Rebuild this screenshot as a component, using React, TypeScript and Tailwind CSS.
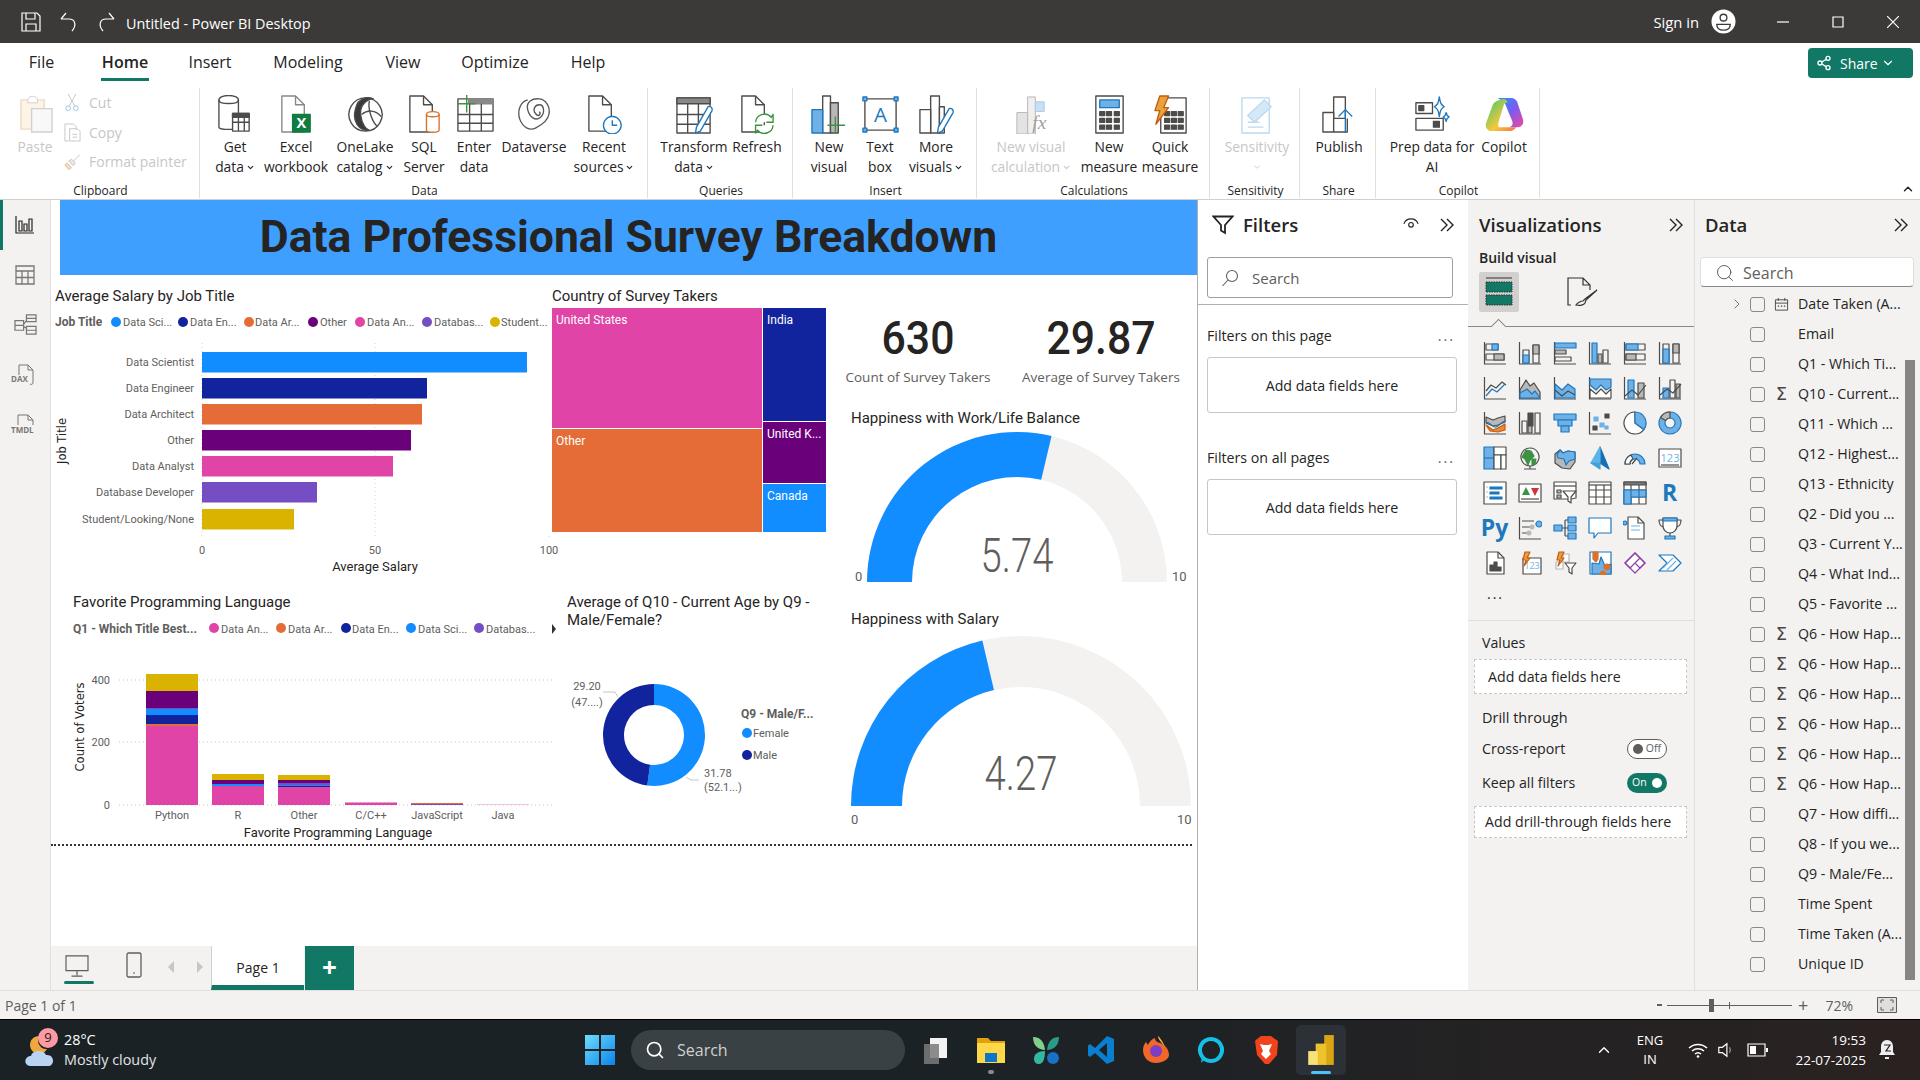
import type { ReactNode } from "react";
import { ChevronDown, ChevronRight, ChevronUp, Search, Share2 } from "lucide-react";

const BLUE = "#118DFF";
const NAVY = "#12239E";
const ORANGE = "#E66C37";
const PURPLE = "#6B007B";
const PINK = "#E044A7";
const VIOLET = "#744EC2";
const GOLD = "#D9B300";

// tiny icon format: [path, fill, stroke]; a path starting with "T" is a text glyph "Tlabel|x|y|size|weight"
const D = "#4d4c4a";
const B = "#1d78be";
const L = "#6fb1e6";
const G = "#bab8b6";
const N = "none";
const W = "#ffffff";
type Shape = [string, string, string];

function Ico({ s, box = 24, className }: { s: Shape[]; box?: number; className?: string }) {
  return (
    <svg viewBox={`0 0 ${box} ${box}`} className={className}>
      {s.map(([d, fill, stroke], i) => {
        if (d.startsWith("T")) {
          const [label, x, y, size, weight] = d.slice(1).split("|");
          return (
            <text key={i} x={x} y={y} fontSize={size} fontWeight={weight ?? "700"} fill={fill} textAnchor="middle" fontFamily="Open Sans, sans-serif">
              {label}
            </text>
          );
        }
        return <path key={i} d={d} fill={fill} stroke={stroke} strokeWidth={box > 30 ? 1.4 : 1.2} strokeLinejoin="round" />;
      })}
    </svg>
  );
}

const AX: Shape = ["M1.5 1v22H23", N, D];
const vizIcons: (Shape[] | string)[] = [
  [AX, ["M3 3h12v6H3z", N, D], ["M9 3h6v6H9z", L, B], ["M3 13h18v6H3z", N, D], ["M11 13h10v6H11z", G, D]],
  [AX, ["M5 9h6v13H5z", N, D], ["M5 14h6v8H5z", L, B], ["M15 4h6v18h-6z", N, D], ["M15 4h6v9h-6z", G, D]],
  [["M1.5 1v22H23", N, D], ["M2 2h21v5H2z", L, B], ["M2 9h11v4H2z", G, D], ["M2 16h16v4H2z", N, D]],
  [AX, ["M4 2h5v20H4z", L, B], ["M10 13h4v9h-4z", G, D], ["M15 9h5v13h-5z", N, D]],
  [AX, ["M3 3h19v6H3z", N, D], ["M3 3h12v6H3z", L, B], ["M3 13h19v6H3z", N, D], ["M3 13h10v6H3z", G, D]],
  [AX, ["M5 3h6v19H5z", N, D], ["M5 8h6v14H5z", L, B], ["M15 3h6v19h-6z", N, D], ["M15 3h6v9h-6z", G, D]],
  [AX, ["M3 15l5-6 5 3 6-6 4 3", N, D], ["M3 20l6-7 5 3 8-8", N, B]],
  [AX, ["M2 22V14l6-10 4 6 4-3 6 9v6z", G, D], ["M2 22v-5l7-4 5 5 3-3 5 7z", L, B]],
  [AX, ["M2 8l7 6 6-6 7 5v9H2z", L, B], ["M2 14l7 6 6-5 7 4", N, D]],
  [AX, ["M2 3h21v8l-5 3-5-5-5 5-6-5z", L, B], ["M2 22V13l6 5 5-5 5 5 5-5v9z", W, D]],
  [AX, ["M5 4h6v18H5z", L, B], ["M15 7h6v15h-6z", G, D], ["M2 20l7-6 6 5 8-10", N, D]],
  [AX, ["M5 12h6v10H5z", L, B], ["M12 4h5v18h-5z", N, D], ["M18 8h4v14h-4z", G, D], ["M2 19l7-6 6 4 8-9", N, D]],
  [AX, ["M3 6l7 3 5-2 7-2v6l-7 3-5 1-7-3z", G, D], ["M3 14l7 5 5-2 7-4v6l-7 2-8-1z", "#e68a3a", "#c75b12"], ["M3 11c5 0 6 6 10 5s5-6 10-6", N, B]],
  [AX, ["M4 10h5v12H4z", N, D], ["M10 14h4v8h-4z", G, D], ["M10 2h5v13h-5z", D, D], ["M17 2h5v20h-5z", N, D]],
  [["M1 3h22v6H1z", L, B], ["M5 9h14v6H5z", L, B], ["M8 15h8v6H8z", L, B]],
  [AX, ["M6 6h4v4H6z", L, L], ["M12 12h4v4h-4z", L, L], ["M5 15h4v4H5z", D, D], ["M17 3h4v4h-4z", D, D], ["M17 15h3v3h-3z", L, L]],
  [["M12 1a11 11 0 1 0 8.8 17.6L12 12z", W, D], ["M12 1a11 11 0 0 1 8.8 17.6L12 12z", L, B]],
  [["M12 1a11 11 0 1 1-.01 0zM12 7a5 5 0 1 0 .01 0z", L, B], ["M12 1a11 11 0 0 0-9.5 5.5L7.5 9.5A5 5 0 0 1 12 7z", G, D]],
  [["M1 1h10v22H1z", L, B], ["M1 12h10", N, B], ["M11 1h12v8H11z", W, D], ["M11 9h7v14h-7z", W, D], ["M18 9h5v14h-5z", W, D]],
  [["M12 2a9 9 0 1 1-.01 0z", "#f4f4f4", D], ["M8 4l5 1 3 5-4 4-2 5-3-6-3-2z", "#3d9142", "#3d9142"], ["M14 13l4 0-1 5-3 1z", "#3d9142", "#3d9142"], ["M6 23h12M12 20v3", N, D]],
  [["M2 8l5-4 3 3 5-2 7 1v10l-5 7-8-1-7-5z", G, D], ["M7 4l3 3 5-2 7 1v7l-6 2-3 4-2-6-6-1-1-3z", L, B]],
  [["M12 1l9 22-9-6z", "#1a6fb3", "#1a6fb3"], ["M12 1L3 17l9-1z", "#5bb5e8", "#5bb5e8"], ["M3 17l9 0 0 6z", "#3fa2dc", "#3fa2dc"]],
  [["M2 18a10 10 0 0 1 20 0h-5a5 5 0 0 0-10 0z", L, B], ["M2 18a10 10 0 0 1 6-9l2 4a5 5 0 0 0-3 5z", W, D], ["M9 18l5-6", N, D]],
  [["M1 3h22v18H1z", W, D], ["T123|12|16|11|400", L, N], ["M3 19h18", N, D]],
  [["M1 1h22v22H1z", W, D], ["M7 6h12v2H7zM7 11h9v2H7zM7 16h12v2H7z", B, B], ["M3 6h2M3 11h2M3 16h2", N, G]],
  [["M1 3h22v18H1z", W, D], ["M3 18h18", N, D], ["M8 6l4 8H4z", "#3d9142", N], ["M13 7h8l-4 8z", "#d13438", N]],
  [["M1 1h22v16l-5 1H1z", W, D], ["M1 5h22", N, D], ["M4 9h4v3H4zM4 14h4v3H4z", G, D], ["M10 10h13l-5 6v6l-3-2v-4z", W, D]],
  [["M1 1h22v22H1z", W, D], ["M1 4h22", D, D], ["M1 9h22M1 16h22M8 4v19M16 4v19", N, D]],
  [["M1 1h22v22H1z", W, D], ["M1 1h22v3H1z", "#777", D], ["M1 9h22M1 16h22M8 4v19M16 4v19", N, D], ["M1 9h7v14H1zM8 9h8v7H8zM16 9h7v7h-7z", L, B]],
  "R",
  "Py",
  [AX, ["M4 5h12M4 11h8M4 17h5", N, D], ["M21 5a3 3 0 1 1-.01 0z", L, B], ["M14 9a2 2 0 1 1-.01 0zM11 15a2 2 0 1 1-.01 0z", G, G]],
  [["M1 9h8v6H1z", L, B], ["M15 1h8v6h-8zM15 9h8v6h-8zM15 17h8v6h-8z", L, B], ["M9 12h6M12 4v16M12 4h3M12 20h3", N, D]],
  [["M1 2h22v15H10l-4 5v-5H1z", W, B]],
  [["M5 1h10l6 6v16H5z", W, D], ["M15 1v6h6", N, D], ["M2 9a2 2 0 1 1 .01 0z", L, B], ["M8 10h9M8 14h9", N, L]],
  [["M5 2h14v8a7 7 0 0 1-14 0z", W, D], ["M5 2h14v3H5z", L, B], ["M5 4H1c0 5 2 6 4 7M19 4h4c0 5-2 6-4 7M12 17v3", N, D], ["M7 20h10v3H7z", L, B]],
  [["M4 1h11l6 6v16H4z", W, D], ["M15 1v6h6", N, D], ["M7 14h3v6H7zM11 11h3v9h-3zM15 16h3v4h-3z", D, D]],
  [["M5 7h18v16H5z", W, D], ["T123|14|18|9|400", L, N], ["M7 1h5l-3 6h3l-6 8 2-6H5z", "#e8a33d", "#c75b12"]],
  [["M10 3h6v8h-6zM3 11h7v7H3z", W, G], ["M12 12h11l-4 5v6l-3-2v-4z", W, D], ["M6 1h5l-3 6h3l-6 8 2-6H4z", "#e8a33d", "#c75b12"]],
  [["M2 1h21v22H2z", W, B], ["M4 12l7 1 2-7 4 9 6-2v10H4z", L, B], ["M5 1h5v7l-2 3-3-3z", "#d9722a", "#d9722a"], ["M19 13a3 3 0 1 1-.01 0zM15 20a3 3 0 1 1-.01 0z", "#d9722a", "#d9722a"]],
  [["M12 2l10 10-10 10L2 12z", W, "#8f3fa8"], ["M12 2l5 5-10 10-5-5zM17 7l5 5-5 5-5-5z", N, "#8f3fa8"]],
  [["M1 4h14l8 8-8 8H1l8-8z", W, B], ["M5 17L15 7M9 19l9-9", N, L]],
];

const ribbonIcons: Record<string, Shape[]> = {
  getData: [["M3 5c0-6 20-6 20 0v28c0 3-20 3-20 0z", W, D], ["M3 5c0 5 20 5 20 0", N, D], ["M17 19h17v18H17z", W, D], ["M17 19h17v4H17z", D, D], ["M17 28h17M23 23v14M29 23v14", N, D]],
  excel: [["M5 1h14l9 9v28H5z", W, "#8a8886"], ["M19 1v9h9", N, "#8a8886"], ["M16 20h18v18H16z", "#107c41", "#107c41"], ["TX|25|34|15", W, N]],
  onelake: [["M20 3a17 17 0 1 1-.01 0z", W, D], ["M12 8c8-8 14-5 16-4-6 0-14 6-13 16s6 16 9 16C15 38 3 28 12 8z", "#3a3a3a", D], ["M16 20c6-5 14-5 20 2", N, D], ["M24 6c-2 8 3 22 8 26", N, D]],
  sql: [["M5 1h14l9 9v28H5z", W, D], ["M19 1v9h9", N, D], ["M22 20c0-4 13-4 13 0v16c0 3-13 3-13 0z", W, "#d9722a"], ["M22 20c0 3 13 3 13 0", N, "#d9722a"]],
  enter: [["M3 4h36v33H3z", W, D], ["M14 4h25v5H14z", "#8a8886", "#8a8886"], ["M3 20h36M3 29h36M15 9v28M27 9v28", N, D], ["M12 0v18M3 9h18", N, "#3d9142"]],
  dataverse: [["M13 5c-8 2-11 12-8 20s10 12 16 9 13-8 14-15-3-14-10-15-14 3-12 11 8 12 13 8 4-13-1-13-7 5-4 9 6 1 4-2", N, "#5a5958"]],
  recent: [["M4 1h14l9 9v27H4z", W, D], ["M18 1v9h9", N, D], ["M28 22a9 9 0 1 1-.01 0z", W, B], ["M28 26v5h5", N, B]],
  transform: [["M2 3h34v36H2z", W, D], ["M2 3h34v6H2z", "#8a8886", D], ["M2 20h34M2 30h34M13 9v30M24 9v30", N, D], ["M34 12c2-1 5 1 4 4L26 37l-5 2 1-6z", W, B]],
  refresh: [["M4 1h14l9 9v28H4z", W, D], ["M18 1v9h9", N, D], ["M18 28a9 9 0 0 1 16-5l2-3v8h-7M36 31a9 9 0 0 1-16 5l-2 3v-8h7", W, "#3d9142"]],
  newVisual: [["M13 1h8v38h-8z", W, D], ["M2 15h11v24H2z", L, B], ["M21 8h8v31h-8z", G, D], ["M26 22v18M18 31h18", N, "#3d9142"]],
  textBox: [["M4 4h32v32H4z", W, D], ["TA|20|28|21|400", B, N], ["M2 2h4v4H2zM34 2h4v4h-4zM2 34h4v4H2zM34 34h4v4h-4z", L, B]],
  moreVisuals: [["M14 1h9v38h-9z", W, D], ["M3 15h11v24H3z", W, D], ["M23 12h5v27h-5z", W, D], ["M33 14c2-1 5 1 4 4L26 37l-5 2 1-6z", W, B]],
  measure: [["M6 1h28v38H6z", W, D], ["M10 5h20v8H10z", L, B], ["M10 17h5v4h-5zM17 17h5v4h-5zM25 17h5v4h-5zM10 24h5v4h-5zM17 24h5v4h-5zM25 24h5v4h-5zM10 31h5v4h-5zM17 31h5v4h-5zM25 31h5v4h-5z", D, D]],
  quick: [["M10 3h26v36H10z", W, D], ["M14 17h5v4h-5zM21 17h5v4h-5zM28 17h5v4h-5zM14 24h5v4h-5zM21 24h5v4h-5zM28 24h5v4h-5zM14 31h5v4h-5zM21 31h5v4h-5zM28 31h5v4h-5z", D, D], ["M9 1h9l-5 12h5L5 30l4-14H4z", "#e8a33d", "#c75b12"]],
  sens: [["M4 3h28v36H4z", W, "#bcd9ef"], ["M10 21L27 5l7 7-17 16z", "#d5e8f6", "#bcd9ef"], ["M10 28h12M10 33h16", N, "#bcd9ef"]],
  publish: [["M14 2h12v22H14z", W, D], ["M3 18h11v20H3z", W, D], ["M14 38h14V24", N, D], ["M26 39V15M19 22l7-7 7 7", N, B]],
  prep: [["M3 8h17v11H3z", W, D], ["M6 11h5v5H6z", D, D], ["M3 24h28v12H3z", W, D], ["M21 27h6v6h-6z", D, D], ["M27 2c1 7 2 8 5 10-3 2-4 3-5 10-1-7-2-8-5-10 3-2 4-3 5-10z", W, B], ["M34 18c.5 3 1 3.5 3 4.5-2 1-2.5 1.5-3 4.5-.5-3-1-3.5-3-4.5 2-1 2.5-1.5 3-4.5z", W, B]],
};

type RibbonItem = { icon: ReactNode; lines: ReactNode[]; w: string; off?: boolean };

const big = "h-[39px] w-[39px]";
const groups: { label: string; w: string; pad: string; items: RibbonItem[] }[] = [
  {
    label: "Data",
    w: "w-[448px]",
    pad: "pl-[5px]",
    items: [
      { w: "w-[60px]", icon: <Ico s={ribbonIcons.getData} box={40} className={big} />, lines: ["Get", <Caret key="c" text="data" />] },
      { w: "w-[62px]", icon: <Ico s={ribbonIcons.excel} box={40} className={big} />, lines: ["Excel", "workbook"] },
      { w: "w-[76px]", icon: <Ico s={ribbonIcons.onelake} box={40} className={big} />, lines: ["OneLake", <Caret key="c" text="catalog" />] },
      { w: "w-[42px]", icon: <Ico s={ribbonIcons.sql} box={40} className={big} />, lines: ["SQL", "Server"] },
      { w: "w-[58px]", icon: <Ico s={ribbonIcons.enter} box={40} className={big} />, lines: ["Enter", "data"] },
      { w: "w-[62px]", icon: <Ico s={ribbonIcons.dataverse} box={40} className={big} />, lines: ["Dataverse"] },
      { w: "w-[78px]", icon: <Ico s={ribbonIcons.recent} box={40} className={big} />, lines: ["Recent", <Caret key="c" text="sources" />] },
    ],
  },
  {
    label: "Queries",
    w: "w-[145px]",
    pad: "pl-[8px]",
    items: [
      { w: "w-[76px]", icon: <Ico s={ribbonIcons.transform} box={40} className={big} />, lines: ["Transform", <Caret key="c" text="data" />] },
      { w: "w-[50px]", icon: <Ico s={ribbonIcons.refresh} box={40} className={big} />, lines: ["Refresh"] },
    ],
  },
  {
    label: "Insert",
    w: "w-[184px]",
    pad: "pl-[12px]",
    items: [
      { w: "w-[48px]", icon: <Ico s={ribbonIcons.newVisual} box={40} className={big} />, lines: ["New", "visual"] },
      { w: "w-[54px]", icon: <Ico s={ribbonIcons.textBox} box={40} className={big} />, lines: ["Text", "box"] },
      { w: "w-[58px]", icon: <Ico s={ribbonIcons.moreVisuals} box={40} className={big} />, lines: ["More", <Caret key="c" text="visuals" />] },
    ],
  },
  {
    label: "Calculations",
    w: "w-[233px]",
    pad: "pl-[8px]",
    items: [
      {
        w: "w-[92px]",
        off: true,
        icon: (
          <svg viewBox="0 0 40 40" className={big}>
            <path d="M16 2h8v38h-8z" fill="#f0efee" stroke={G} />
            <path d="M5 18h11v22H5z" fill="#e4e3e2" stroke={G} />
            <path d="M24 7h9v10h-9z" fill="#c9dff2" stroke="#a9cbe8" />
            <text x="28" y="35" fontSize="20" fontStyle="italic" fontFamily="Liberation Serif, serif" fill="#a19f9d" textAnchor="middle">
              fx
            </text>
          </svg>
        ),
        lines: ["New visual", <Caret key="c" text="calculation" />],
      },
      { w: "w-[64px]", icon: <Ico s={ribbonIcons.measure} box={40} className={big} />, lines: ["New", "measure"] },
      { w: "w-[58px]", icon: <Ico s={ribbonIcons.quick} box={40} className={big} />, lines: ["Quick", "measure"] },
    ],
  },
  {
    label: "Sensitivity",
    w: "w-[90px]",
    pad: "pl-[5px]",
    items: [{ w: "w-[84px]", off: true, icon: <Ico s={ribbonIcons.sens} box={40} className={big} />, lines: ["Sensitivity", <ChevronDown key="c" className="mx-auto mt-[5px] h-[10px] w-[10px]" />] }],
  },
  {
    label: "Share",
    w: "w-[76px]",
    pad: "pl-[4px]",
    items: [{ w: "w-[70px]", icon: <Ico s={ribbonIcons.publish} box={40} className={big} />, lines: ["Publish"] }],
  },
  {
    label: "Copilot",
    w: "w-[164px]",
    pad: "pl-[8px]",
    items: [
      { w: "w-[96px]", icon: <Ico s={ribbonIcons.prep} box={40} className={big} />, lines: ["Prep data for", "AI"] },
      {
        w: "w-[48px]",
        icon: (
          <svg viewBox="0 0 40 36" className={big}>
            <defs>
              <linearGradient id="cp1" x1="0" y1="0" x2="1" y2="1">
                <stop offset="0" stopColor="#1d9bf0" />
                <stop offset="0.5" stopColor="#7a5cf0" />
                <stop offset="1" stopColor="#f0469e" />
              </linearGradient>
              <linearGradient id="cp2" x1="0" y1="0" x2="1" y2="1">
                <stop offset="0" stopColor="#37c871" />
                <stop offset="0.6" stopColor="#f5c83c" />
                <stop offset="1" stopColor="#f2724a" />
              </linearGradient>
            </defs>
            <path d="M13 1h14c3 0 5 2 6 4l6 18c1 4-1 8-6 8h-8c3-1 4-3 3-6L21 8c-1-3-3-4-8-7z" fill="url(#cp1)" />
            <path d="M15 3c3-2 8-1 8 3l-3 0-5 16c-1 4-2 5-1 9h18c-2 3-4 4-8 4H7c-5 0-7-4-6-8L8 8c1-3 4-4 7-5z" fill="url(#cp2)" />
          </svg>
        ),
        lines: ["Copilot"],
      },
    ],
  },
];

function Caret({ text }: { text: string }) {
  return (
    <span className="inline-flex items-center gap-[2px]">
      {text}
      <ChevronDown className="h-[9px] w-[9px]" strokeWidth={3} />
    </span>
  );
}

const tabs = [
  { t: "File", w: "w-[83px]" },
  { t: "Home", w: "w-[84px]", on: true },
  { t: "Insert", w: "w-[86px]" },
  { t: "Modeling", w: "w-[110px]" },
  { t: "View", w: "w-[80px]" },
  { t: "Optimize", w: "w-[104px]" },
  { t: "Help", w: "w-[82px]" },
];

const fields: { name: string; sigma?: boolean; date?: boolean }[] = [
  { name: "Date Taken (A...", date: true },
  { name: "Email" },
  { name: "Q1 - Which Ti..." },
  { name: "Q10 - Current...", sigma: true },
  { name: "Q11 - Which ..." },
  { name: "Q12 - Highest..." },
  { name: "Q13 - Ethnicity" },
  { name: "Q2 - Did you ..." },
  { name: "Q3 - Current Y..." },
  { name: "Q4 - What Ind..." },
  { name: "Q5 - Favorite ..." },
  { name: "Q6 - How Hap...", sigma: true },
  { name: "Q6 - How Hap...", sigma: true },
  { name: "Q6 - How Hap...", sigma: true },
  { name: "Q6 - How Hap...", sigma: true },
  { name: "Q6 - How Hap...", sigma: true },
  { name: "Q6 - How Hap...", sigma: true },
  { name: "Q7 - How diffi..." },
  { name: "Q8 - If you we..." },
  { name: "Q9 - Male/Fe..." },
  { name: "Time Spent" },
  { name: "Time Taken (A..." },
  { name: "Unique ID" },
];

const salaryBars = [
  { name: "Data Scientist", y: 352, end: 527, c: BLUE },
  { name: "Data Engineer", y: 378, end: 427, c: NAVY },
  { name: "Data Architect", y: 404, end: 422, c: ORANGE },
  { name: "Other", y: 430, end: 411, c: PURPLE },
  { name: "Data Analyst", y: 456, end: 393, c: PINK },
  { name: "Database Developer", y: 482, end: 317, c: VIOLET },
  { name: "Student/Looking/None", y: 509, end: 294, c: GOLD },
];

const stacks = [
  { name: "Python", x: 146, segs: [[674, 691, GOLD], [691, 708, PURPLE], [708, 709, VIOLET], [709, 715, BLUE], [715, 724, NAVY], [724, 726, ORANGE], [726, 805, PINK]] },
  { name: "R", x: 212, segs: [[774, 780, GOLD], [780, 784, PURPLE], [784, 786, BLUE], [786, 805, PINK]] },
  { name: "Other", x: 278, segs: [[775, 780, GOLD], [780, 783, PURPLE], [783, 785, VIOLET], [785, 786, BLUE], [786, 787, NAVY], [787, 805, PINK]] },
  { name: "C/C++", x: 345, segs: [[802, 803, "#e9a0d0"], [803, 805, PINK]] },
  { name: "JavaScript", x: 411, segs: [[803, 804, ORANGE], [804, 805, VIOLET]] },
  { name: "Java", x: 477, segs: [[804, 805, "#eec3df"]] },
] as { name: string; x: number; segs: [number, number, string][] }[];

function sector(cx: number, cy: number, R: number, r: number, a0: number, a1: number) {
  const pt = (rad: number, a: number) => `${cx + rad * Math.cos(a)} ${cy + rad * Math.sin(a)}`;
  const large = a1 - a0 > Math.PI ? 1 : 0;
  return `M${pt(R, a0)}A${R} ${R} 0 ${large} 1 ${pt(R, a1)}L${pt(r, a1)}A${r} ${r} 0 ${large} 0 ${pt(r, a0)}Z`;
}

const lbl = "font-['Roboto'] text-[11px] fill-[#605e5c]";
const axisTitle = "font-['Roboto'] text-[13px] fill-[#252423]";
const axisTitleRot = "font-['DejaVu_Sans'] text-[11.5px] fill-[#252423]";
const legendBold = "font-['Roboto'] text-[12px] font-bold fill-[#605e5c]";

function Legend({ items }: { items: { dot: number; text: number; t: string; c: string }[] }) {
  return (
    <>
      {items.map((l) => (
        <g key={l.t}>
          <circle cx={l.dot} cy={322} r={5} fill={l.c} />
          <text x={l.text} y={326} className={lbl}>
            {l.t}
          </text>
        </g>
      ))}
    </>
  );
}

function SalaryChart() {
  return (
    <svg viewBox="50 310 520 265" className="absolute left-[-1px] top-[110px] h-[265px] w-[520px]">
      <Legend
        items={[
          { dot: 116, text: 123, t: "Data Sci...", c: BLUE },
          { dot: 183, text: 190, t: "Data En...", c: NAVY },
          { dot: 249, text: 255, t: "Data Ar...", c: ORANGE },
          { dot: 313, text: 320, t: "Other", c: PURPLE },
          { dot: 360, text: 367, t: "Data An...", c: PINK },
          { dot: 427, text: 434, t: "Databas...", c: VIOLET },
          { dot: 495, text: 501, t: "Student...", c: GOLD },
        ]}
      />
      <text x={55} y={326} className={legendBold}>
        Job Title
      </text>
      <path d="M202 343V538M375 343V538M549 536V538" stroke="#d5d3d1" strokeDasharray="1 3" />
      {salaryBars.map((b) => (
        <g key={b.name}>
          <rect x={202} y={b.y} width={b.end - 202} height={20.5} fill={b.c} />
          <text x={194} y={b.y + 14} textAnchor="end" className={lbl}>
            {b.name}
          </text>
        </g>
      ))}
      <text x={202} y={554} textAnchor="middle" className={lbl}>
        0
      </text>
      <text x={375} y={554} textAnchor="middle" className={lbl}>
        50
      </text>
      <text x={549} y={554} textAnchor="middle" className={lbl}>
        100
      </text>
      <text x={375} y={571} textAnchor="middle" className={axisTitle}>
        Average Salary
      </text>
      <text x={66} y={441} textAnchor="middle" transform="rotate(-90 66 441)" className={axisTitleRot}>
        Job Title
      </text>
    </svg>
  );
}

function Treemap() {
  const cells = [
    { x: 552, y: 308, w: 210, h: 120, c: PINK, t: "United States" },
    { x: 552, y: 429, w: 210, h: 103, c: ORANGE, t: "Other" },
    { x: 763, y: 308, w: 63, h: 113, c: NAVY, t: "India" },
    { x: 763, y: 422, w: 63, h: 61, c: PURPLE, t: "United K..." },
    { x: 763, y: 484, w: 63, h: 48, c: BLUE, t: "Canada" },
  ];
  return (
    <svg viewBox="552 308 274 224" className="absolute left-[501px] top-[108px] h-[224px] w-[274px]">
      {cells.map((c) => (
        <g key={c.t}>
          <rect x={c.x} y={c.y} width={c.w} height={c.h} fill={c.c} />
          <text x={c.x + 4} y={c.y + 16} className="fill-white font-['Roboto'] text-[12px]">
            {c.t}
          </text>
        </g>
      ))}
    </svg>
  );
}

function LanguageChart() {
  const leg = [
    { dot: 214, text: 221, t: "Data An...", c: PINK },
    { dot: 281, text: 288, t: "Data Ar...", c: ORANGE },
    { dot: 346, text: 352, t: "Data En...", c: NAVY },
    { dot: 411, text: 418, t: "Data Sci...", c: BLUE },
    { dot: 479, text: 486, t: "Databas...", c: VIOLET },
  ];
  return (
    <svg viewBox="70 618 490 222" className="absolute left-[19px] top-[418px] h-[222px] w-[490px]">
      {leg.map((l) => (
        <g key={l.t}>
          <circle cx={l.dot} cy={628} r={5} fill={l.c} />
          <text x={l.text} y={633} className={lbl}>
            {l.t}
          </text>
        </g>
      ))}
      <text x={73} y={633} className={legendBold}>
        Q1 - Which Title Best...
      </text>
      <path d="M552 624l4 5-4 5z" fill="#333" />
      <path d="M119 680H553M119 742H553M119 805H553" stroke="#c8c6c4" strokeDasharray="1 3" />
      {[
        [400, 684],
        [200, 746],
        [0, 809],
      ].map(([v, y]) => (
        <text key={v} x={110} y={y} textAnchor="end" className={lbl}>
          {v}
        </text>
      ))}
      {stacks.map((s) => (
        <g key={s.name}>
          {s.segs.map(([y0, y1, c]) => (
            <rect key={y0} x={s.x} y={y0} width={52} height={y1 - y0} fill={c} />
          ))}
          <text x={s.x + 26} y={819} textAnchor="middle" className={lbl}>
            {s.name}
          </text>
        </g>
      ))}
      <text x={338} y={837} textAnchor="middle" className={axisTitle}>
        Favorite Programming Language
      </text>
      <text x={84} y={727} textAnchor="middle" transform="rotate(-90 84 727)" className={axisTitleRot}>
        Count of Voters
      </text>
    </svg>
  );
}

function DonutChart() {
  const start = -Math.PI / 2;
  const mid = start + 2 * Math.PI * 0.521;
  return (
    <svg viewBox="570 670 260 130" className="absolute left-[519px] top-[470px] h-[130px] w-[260px]">
      <path d={sector(654, 735, 51, 30, start, mid)} fill={BLUE} />
      <path d={sector(654, 735, 51, 30, mid, start + 2 * Math.PI)} fill={NAVY} />
      <path d="M603 692h12l3 5M686 777l5 3h8" fill="none" stroke="#c8c6c4" />
      <text x={587} y={690} textAnchor="middle" className={lbl}>
        29.20
      </text>
      <text x={587} y={706} textAnchor="middle" className={lbl}>
        (47....)
      </text>
      <text x={704} y={777} className={lbl}>
        31.78
      </text>
      <text x={704} y={791} className={lbl}>
        (52.1...)
      </text>
      <text x={741} y={718} className={legendBold}>
        Q9 - Male/F...
      </text>
      <circle cx={747} cy={733} r={5} fill={BLUE} />
      <text x={753} y={737} className={lbl}>
        Female
      </text>
      <circle cx={747} cy={755} r={5} fill={NAVY} />
      <text x={753} y={759} className={lbl}>
        Male
      </text>
    </svg>
  );
}

function Gauge({ cx, cy, R, r, v }: { cx: number; cy: number; R: number; r: number; v: number }) {
  const a = Math.PI + (Math.PI * v) / 10;
  return (
    <svg viewBox={`${cx - R} ${cy - R} ${2 * R} ${R}`} className={R === 150 ? "h-[150px] w-[300px]" : "h-[170px] w-[340px]"}>
      <path d={sector(cx, cy, R, r, Math.PI, 2 * Math.PI)} fill="#f3f2f1" />
      <path d={sector(cx, cy, R, r, Math.PI, a)} fill={BLUE} />
    </svg>
  );
}

function ReportCanvas() {
  const title = "absolute font-['Roboto'] text-[15px] leading-[18px] text-[#252423]";
  const kpi = "absolute w-[180px] text-center font-['Roboto'] text-[47px] font-medium leading-[50px] text-[#252423] scale-x-[0.91]";
  const kpiSub = "absolute w-[180px] text-center text-[13.5px] leading-[18px] text-[#605e5c]";
  const gaugeVal = "absolute w-[120px] text-center font-['Roboto'] text-[49px] font-light leading-[50px] text-[#605e5c] scale-x-[0.78]";
  const gaugeEnd = "absolute font-['Roboto'] text-[13px] leading-[16px] text-[#605e5c]";
  return (
    <div className="relative h-[746px] w-[1146px] overflow-hidden bg-white">
      <div className="absolute left-[9px] top-0 flex h-[75px] w-[1137px] items-center justify-center bg-[#3e9fff]">
        <span className="font-['Roboto'] text-[44.5px] font-bold text-[#252423]">Data Professional Survey Breakdown</span>
      </div>

      <div className={`${title} left-[4px] top-[87px]`}>Average Salary by Job Title</div>
      <SalaryChart />
      <div className={`${title} left-[501px] top-[87px]`}>Country of Survey Takers</div>
      <Treemap />

      <div className={`${kpi} left-[777px] top-[113px]`}>630</div>
      <div className={`${kpiSub} left-[777px] top-[168px]`}>Count of Survey Takers</div>
      <div className={`${kpi} left-[960px] top-[113px]`}>29.87</div>
      <div className={`${kpiSub} left-[960px] top-[168px]`}>Average of Survey Takers</div>

      <div className={`${title} left-[800px] top-[209px]`}>Happiness with Work/Life Balance</div>
      <div className="absolute left-[816px] top-[232px]">
        <Gauge cx={1017} cy={582} R={150} r={105} v={5.74} />
      </div>
      <div className={`${gaugeVal} left-[906px] top-[331px]`}>5.74</div>
      <div className={`${gaugeEnd} left-[804px] top-[369px]`}>0</div>
      <div className={`${gaugeEnd} left-[1121px] top-[369px]`}>10</div>

      <div className={`${title} left-[800px] top-[410px]`}>Happiness with Salary</div>
      <div className="absolute left-[800px] top-[436px]">
        <Gauge cx={1021} cy={806} R={170} r={119} v={4.27} />
      </div>
      <div className={`${gaugeVal} left-[910px] top-[549px]`}>4.27</div>
      <div className={`${gaugeEnd} left-[800px] top-[612px]`}>0</div>
      <div className={`${gaugeEnd} left-[1126px] top-[612px]`}>10</div>

      <div className={`${title} left-[22px] top-[393px]`}>Favorite Programming Language</div>
      <LanguageChart />
      <div className={`${title} left-[516px] top-[393px] w-[270px] leading-[17px]`}>Average of Q10 - Current Age by Q9 - Male/Female?</div>
      <DonutChart />

      <div className="absolute left-0 top-[644px] w-[1141px] border-t-2 border-dotted border-[#333]" />
    </div>
  );
}

function Chevrons({ className = "" }: { className?: string }) {
  return (
    <svg viewBox="0 0 16 16" className={`h-[16px] w-[16px] ${className}`}>
      <path d="M2 2l6 6-6 6M8 2l6 6-6 6" fill="none" stroke="#252423" strokeWidth="1.4" />
    </svg>
  );
}

function FiltersPane() {
  const label = "flex h-6 items-center justify-between pr-[9px] text-[14.2px] text-[#252423]";
  const box = "mt-[9px] flex h-[56px] w-[250px] items-center justify-center rounded-[3px] border border-[#c8c6c4] pt-[2px] text-[14.2px] text-[#252423]";
  return (
    <div className="w-[271px] shrink-0 border-l border-[#b3b0ad] bg-white">
      <div className="flex h-[50px] items-center pl-[14px] pr-[13px]">
        <svg viewBox="0 0 22 20" className="h-[20px] w-[22px]">
          <path d="M1.5 1.5h19L13 10v8l-4-2.5V10z" fill="none" stroke="#252423" strokeWidth="1.8" />
        </svg>
        <span className="ml-[9px] flex-1 text-[18.5px] font-semibold text-[#252423]">Filters</span>
        <svg viewBox="0 0 18 14" className="mb-[4px] mr-[20px] h-[14px] w-[16px]">
          <path d="M1 8a8.500 8.500 0 0 1 16 0" fill="none" stroke="#252423" strokeWidth="1.3" />
          <circle cx="9" cy="9" r="2.6" fill="none" stroke="#252423" strokeWidth="1.3" />
        </svg>
        <Chevrons />
      </div>
      <div className="ml-[9px] mt-[7px] flex h-[41px] w-[246px] items-center rounded-[3px] border border-[#a19f9d] pl-[13px] pt-[1px] text-[15px] text-[#605e5c]">
        <svg viewBox="0 0 18 18" className="h-[18px] w-[18px]">
          <circle cx="11" cy="7" r="5.5" fill="none" stroke="#605e5c" strokeWidth="1.1" />
          <path d="M7 11l-5.500 6" stroke="#605e5c" strokeWidth="1.1" />
        </svg>
        <span className="ml-[13px]">Search</span>
      </div>
      <div className="mt-[6px] border-t border-[#b3b0ad]" />
      <div className="pl-[9px] pr-[4px] pt-[19px]">
        <div className={label}>
          <span>Filters on this page</span>
          <span className="tracking-[2px] text-[#605e5c]">...</span>
        </div>
        <div className={box}>Add data fields here</div>
        <div className={`${label} mt-[33px]`}>
          <span>Filters on all pages</span>
          <span className="tracking-[2px] text-[#605e5c]">...</span>
        </div>
        <div className={box}>Add data fields here</div>
      </div>
    </div>
  );
}

function Toggle({ on }: { on?: boolean }) {
  return on ? (
    <div className="flex h-[20px] w-[40px] items-center justify-between rounded-full bg-[#117865] px-[5px] text-[10.5px] text-white">
      <span>On</span>
      <span className="h-[10px] w-[10px] rounded-full bg-white" />
    </div>
  ) : (
    <div className="flex h-[20px] w-[40px] items-center justify-between rounded-full border border-[#605e5c] bg-white px-[5px] text-[10.5px] text-[#605e5c]">
      <span className="h-[10px] w-[10px] rounded-full bg-[#605e5c]" />
      <span>Off</span>
    </div>
  );
}

function VizPane() {
  const dashed = "ml-[6px] flex w-[213px] items-center border border-dashed border-[#c8c6c4] bg-white text-[14.2px] text-[#252423]";
  return (
    <div className="w-[227px] shrink-0 border-r border-[#e1dfdd] bg-[#f3f2f1]">
      <div className="flex h-[49px] items-center justify-between pl-[11px] pr-[10px]">
        <span className="text-[18.5px] font-semibold text-[#252423]">Visualizations</span>
        <Chevrons />
      </div>
      <div className="flex h-[16px] items-center pl-[11px] text-[14px] font-semibold text-[#252423]">Build visual</div>
      <div className="relative mt-[7px] flex h-[55px] items-start border-b border-[#8a8886] pl-[11px]">
        <div className="flex h-[40px] w-[40px] items-center justify-center rounded-[2px] bg-[#d2d0ce]">
          <svg viewBox="0 0 32 32" className="h-[32px] w-[32px]">
            <path d="M3 2h26" stroke="#333" strokeWidth="1" />
            <path d="M3 6h26v10H3zM3 19h26v10H3z" fill="#117865" stroke="#333" strokeWidth="1" strokeDasharray="1.5 1" />
          </svg>
        </div>
        <svg viewBox="0 0 32 32" className="ml-[47px] mt-[4px] h-[32px] w-[32px]">
          <path d="M5 29H2V2h15l7 7v5M17 2v7h7" fill="none" stroke="#333" strokeWidth="1.2" />
          <path d="M31 14L19 23l-2 2c-2 0-6 2-7 4 4 1 8 0 9-2l1-3z" fill="none" stroke="#333" strokeWidth="1.2" />
        </svg>
        <div className="absolute bottom-[-6px] left-[25px] h-[11px] w-[11px] rotate-45 border-l border-t border-[#8a8886] bg-[#f3f2f1]" />
      </div>
      <div className="grid grid-cols-[repeat(6,35px)] grid-rows-[repeat(7,35px)] pl-[9px] pt-[8px]">
        {vizIcons.map((s, i) => (
          <div key={i} className="flex items-center justify-center">
            {typeof s === "string" ? (
              <span className="text-[23px] font-bold leading-none text-[#1d78be]">{s}</span>
            ) : (
              <Ico s={s} className="h-[24px] w-[24px]" />
            )}
          </div>
        ))}
      </div>
      <div className="flex h-[26px] items-center pl-[19px] text-[14px] tracking-[2px] text-[#252423]">...</div>
      <div className="mt-[14px] border-t border-[#e1dfdd]" />
      <div className="mt-[11px] flex h-[21px] items-center pl-[14px] pt-[1px] text-[14.2px] text-[#252423]">Values</div>
      <div className={`${dashed} mt-[6px] h-[35px] pl-[13px]`}>Add data fields here</div>
      <div className="mt-[13px] flex h-[21px] items-center pl-[14px] text-[14.5px] font-medium text-[#252423]">Drill through</div>
      <div className="mt-[11px] flex h-[20px] items-center justify-between pl-[14px] pr-[27px] text-[14.2px] text-[#252423]">
        <span>Cross-report</span>
        <Toggle />
      </div>
      <div className="mt-[14px] flex h-[20px] items-center justify-between pl-[14px] pr-[27px] text-[14.2px] text-[#252423]">
        <span>Keep all filters</span>
        <Toggle on />
      </div>
      <div className={`${dashed} mt-[13px] h-[32px] pl-[10px]`}>Add drill-through fields here</div>
    </div>
  );
}

function DataPane() {
  return (
    <div className="relative flex-1 bg-[#f3f2f1]">
      <div className="flex h-[50px] items-center justify-between pl-[10px] pr-[11px]">
        <span className="text-[18.5px] font-semibold text-[#252423]">Data</span>
        <Chevrons />
      </div>
      <div className="ml-[5px] mt-[7px] flex h-[30px] w-[214px] items-center rounded-[4px] border border-[#e1dfdd] border-b-[#8a8886] bg-white pl-[14px] pt-[1px] text-[16px] text-[#605e5c]">
        <Search className="h-[20px] w-[20px]" strokeWidth={1.2} />
        <span className="ml-[8px]">Search</span>
      </div>
      <div className="mt-[2px]">
        {fields.map((f, i) => (
          <div key={i} className="relative flex h-[30px] items-center pl-[55px] text-[14.2px] text-[#252423]">
            {f.date && <ChevronRight className="absolute left-[34px] h-[16px] w-[16px] text-[#605e5c]" strokeWidth={1.3} />}
            <span className="h-[15px] w-[15px] rounded-[3px] border border-[#8a8886]" />
            <span className="flex w-[33px] items-center justify-center text-[#484644]">
              {f.sigma && <span className="font-['DejaVu_Sans'] text-[18px] leading-none">Σ</span>}
              {f.date && (
                <svg viewBox="0 0 16 16" className="h-[15px] w-[15px]">
                  <path d="M1.5 3h13v11h-13zM1.5 6.5h13M4.5 1v3M11.5 1v3" fill="none" stroke="#484644" />
                  <path d="M4 9h1.5v1.500H4zM7.300 9h1.500v1.500H7.300zM10.500 9H12v1.500h-1.500z" fill="#484644" />
                </svg>
              )}
            </span>
            <span>{f.name}</span>
          </div>
        ))}
      </div>
      <div className="absolute right-[5px] top-[160px] h-[620px] w-[10px] bg-[#868583]" />
    </div>
  );
}

function RailIcon({ children, className = "" }: { children: ReactNode; className?: string }) {
  return <div className={`flex h-[41px] w-full items-center justify-center text-[#797775] ${className}`}>{children}</div>;
}

function LeftRail() {
  return (
    <div className="relative flex w-[51px] shrink-0 flex-col items-center border-r border-[#e1dfdd] bg-[#f3f2f1] pt-[4px]">
      <div className="absolute left-0 top-0 h-[50px] w-[3px] bg-[#117865]" />
      <RailIcon>
        <svg viewBox="0 0 20 20" className="h-[20px] w-[20px]">
          <path d="M1 1v17h18" fill="none" stroke="#252423" strokeWidth="1.2" />
          <path d="M4 6h3v10H4zM9 9h3v7H9zM14 4h3v12h-3z" fill="none" stroke="#252423" strokeWidth="1.2" />
        </svg>
      </RailIcon>
      <RailIcon className="mt-[9px]">
        <svg viewBox="0 0 20 20" className="h-[20px] w-[20px]">
          <path d="M1 1h18v18H1zM1 6h18M1 12.5h18M7 6v13M13 6v13" fill="none" stroke="#797775" strokeWidth="1.3" />
        </svg>
      </RailIcon>
      <RailIcon className="mt-[9px]">
        <svg viewBox="0 0 24 24" className="h-[23px] w-[23px]">
          <path d="M1 8h9v10H1zM1 13h9M13 2h10v7H13zM13 5.5h10M13 14h10v8H13zM13 18h10M10 12l3-4M10 14l3 2" fill="none" stroke="#797775" strokeWidth="1.3" />
        </svg>
      </RailIcon>
      <RailIcon className="mt-[9px]">
        <div className="relative">
          <svg viewBox="0 0 22 22" className="h-[22px] w-[22px]">
            <path d="M5 11V1h9l5 5v13c0 1-2 2-3 1" fill="none" stroke="#797775" strokeWidth="1" />
            <path d="M14 1v5h5" fill="none" stroke="#797775" strokeWidth="1" />
          </svg>
          <span className="absolute left-[-3px] top-[11px] text-[8px] font-bold leading-none">DAX</span>
        </div>
      </RailIcon>
      <RailIcon className="mt-[9px]">
        <div className="relative">
          <svg viewBox="0 0 22 22" className="h-[22px] w-[22px]">
            <path d="M4 11V1h10l5 5v5M14 1v5h5" fill="none" stroke="#797775" strokeWidth="1" />
          </svg>
          <span className="absolute left-[-3px] top-[12px] text-[8px] font-bold leading-none">TMDL</span>
        </div>
      </RailIcon>
    </div>
  );
}

function TitleBar() {
  return (
    <div className="flex h-[43px] items-center bg-[#3b3a39] text-white">
      <svg viewBox="0 0 20 20" className="ml-[21px] h-[20px] w-[20px]">
        <path d="M1 1h15l3 3v15H1zM5 1v6h9V1M5 19v-7h10v7" fill="none" stroke="#fff" strokeWidth="1.2" />
      </svg>
      <svg viewBox="0 0 18 22" className="ml-[19px] h-[22px] w-[18px]">
        <path d="M1 8l5-6M1 8h8c6 0 8 6 3 12" fill="none" stroke="#fff" strokeWidth="1.2" />
      </svg>
      <svg viewBox="0 0 18 22" className="ml-[19px] h-[22px] w-[18px]">
        <path d="M17 8l-5-6M17 8H9C3 8 1 14 6 20" fill="none" stroke="#fff" strokeWidth="1.2" />
      </svg>
      <span className="ml-[11px] flex-1 pt-[4px] text-[14.4px]">Untitled - Power BI Desktop</span>
      <span className="pt-[1px] text-[14.8px]">Sign in</span>
      <svg viewBox="0 0 26 26" className="ml-[12px] h-[25px] w-[25px]">
        <circle cx="13" cy="13" r="12.5" fill="#fff" />
        <circle cx="13" cy="9" r="3.5" fill="none" stroke="#3b3a39" strokeWidth="1.4" />
        <path d="M6 16h14c0 4-3 6-7 6s-7-2-7-6z" fill="none" stroke="#3b3a39" strokeWidth="1.4" />
      </svg>
      <svg viewBox="0 0 12 12" className="ml-[41px] h-[12px] w-[12px]">
        <path d="M0 6h12" stroke="#fff" strokeWidth="1.2" />
      </svg>
      <svg viewBox="0 0 12 12" className="ml-[43px] h-[12px] w-[12px]">
        <path d="M1 1h10v10H1z" fill="none" stroke="#fff" strokeWidth="1.2" />
      </svg>
      <svg viewBox="0 0 12 12" className="ml-[43px] mr-[21px] h-[12px] w-[12px]">
        <path d="M0 0l12 12M12 0L0 12" stroke="#fff" strokeWidth="1.2" />
      </svg>
    </div>
  );
}

function RibbonGroup({ label, w, pad, items }: { label: string; w: string; pad: string; items: RibbonItem[] }) {
  return (
    <div className={`flex h-[110px] shrink-0 flex-col border-r border-[#e1dfdd] ${w}`}>
      <div className={`flex h-[92px] ${pad}`}>
        {items.map((it, i) => (
          <div key={i} className={`flex shrink-0 flex-col items-center pt-[7px] ${it.w} ${it.off ? "text-[#c8c6c4]" : "text-[#252423]"}`}>
            {it.icon}
            <div className="mt-[3px] flex flex-col items-center whitespace-nowrap text-[13.8px] leading-[20px]">
              {it.lines.map((l, j) => (
                <span key={j}>{l}</span>
              ))}
            </div>
          </div>
        ))}
      </div>
      <div className="mt-[4px] pl-[2px] text-center text-[12px] leading-[14px] text-[#252423]">{label}</div>
    </div>
  );
}

function Ribbon() {
  const small = "flex h-[29.5px] items-center text-[14px] text-[#c8c6c4]";
  return (
    <div className="relative bg-white">
      <div className="flex h-[45px] items-start">
        {tabs.map((t) => (
          <div key={t.t} className={`relative flex h-[38px] items-center justify-center text-[16px] text-[#252423] ${t.w} ${t.on ? "font-semibold" : ""}`}>
            {t.t}
            {t.on && <span className="absolute bottom-0 left-[18px] right-[18px] h-[3px] bg-[#117865]" />}
          </div>
        ))}
        <div className="ml-auto mr-[7px] mt-[5px] flex h-[30px] w-[105px] items-center rounded-[4px] bg-[#117865] pl-[8px] text-[14px] text-white">
          <Share2 className="h-[16px] w-[16px]" />
          <span className="ml-[8px]">Share</span>
          <ChevronDown className="ml-[3px] h-[14px] w-[14px]" />
        </div>
      </div>
      <div className="flex h-[112px] items-start border-b border-[#d2d0ce]">
        <div className="flex h-[110px] w-[200px] shrink-0 flex-col border-r border-[#e1dfdd]">
          <div className="flex h-[92px]">
            <div className="flex w-[64px] shrink-0 flex-col items-center pl-[9px] pr-[3px] pt-[7px] text-[13.8px] text-[#c8c6c4]">
              <svg viewBox="0 0 36 40" className="h-[39px] w-[35px]">
                <path d="M3 5h24v30H3z" fill="#fdf3e6" stroke="#f0d9bd" strokeWidth="1.4" />
                <path d="M10 5c0-5 10-5 10 0v3H10z" fill="#fff" stroke="#d2d0ce" />
                <path d="M14 14h21v24H14z" fill="#f8f8f8" stroke="#d2d0ce" strokeWidth="1.4" />
              </svg>
              <span className="mt-[3px] leading-[20px]">Paste</span>
            </div>
            <div className="flex flex-col">
              <div className={small}>
                <svg viewBox="0 0 16 20" className="mr-[9px] h-[19px] w-[16px]">
                  <path d="M4 1l7 13M12 1L5 14" stroke="#c8c6c4" />
                  <circle cx="4" cy="16" r="2.5" fill="none" stroke="#9ec4e4" />
                  <circle cx="12" cy="16" r="2.5" fill="none" stroke="#9ec4e4" />
                </svg>
                Cut
              </div>
              <div className={small}>
                <svg viewBox="0 0 18 20" className="mr-[8px] h-[19px] w-[17px]">
                  <path d="M1 1h9l3 3v3M5 19H1V1" fill="none" stroke="#c8c6c4" />
                  <path d="M6 6h8l3 3v10H6z" fill="none" stroke="#c8c6c4" />
                  <path d="M9 12h5M9 15h5" stroke="#c8c6c4" />
                </svg>
                Copy
              </div>
              <div className={small}>
                <svg viewBox="0 0 18 18" className="mr-[8px] h-[18px] w-[17px]">
                  <path d="M17 1L9 9M3 10l5 5-3 2-4-5z" fill="#f5dcbf" stroke="#dcc0a0" />
                  <path d="M5 8l5 5 2-3-4-4z" fill="#e8e8e8" stroke="#c8c6c4" />
                </svg>
                Format painter
              </div>
            </div>
          </div>
          <div className="mt-[4px] pl-[2px] text-center text-[12px] leading-[14px] text-[#252423]">Clipboard</div>
        </div>
        {groups.map((g) => (
          <RibbonGroup key={g.label} {...g} />
        ))}
        <ChevronUp className="absolute bottom-[4px] right-[5px] h-[14px] w-[14px] text-[#252423]" strokeWidth={2.5} />
      </div>
    </div>
  );
}

function PageTabs() {
  return (
    <div className="flex h-[44px] items-stretch bg-[#f3f2f1] pl-[13px]">
      <div className="relative w-[30px] pt-[9px]">
        <svg viewBox="0 0 26 24" className="h-[22px] w-[26px]">
          <path d="M1 1h24v16H1zM13 17v5M7 23h12" fill="none" stroke="#605e5c" strokeWidth="1.3" />
        </svg>
        <span className="absolute bottom-[6px] left-0 h-[3px] w-[30px] rounded-full bg-[#117865]" />
      </div>
      <svg viewBox="0 0 16 26" className="ml-[32px] mt-[6px] h-[26px] w-[16px]">
        <rect x="1" y="1" width="14" height="24" rx="1.5" fill="none" stroke="#605e5c" strokeWidth="1.3" />
        <path d="M7 21h2" stroke="#605e5c" />
      </svg>
      <svg viewBox="0 0 8 14" className="ml-[25px] mt-[14px] h-[14px] w-[8px]">
        <path d="M7 1L1 7l6 6z" fill="#c8c6c4" />
      </svg>
      <svg viewBox="0 0 8 14" className="ml-[21px] mt-[14px] h-[14px] w-[8px]">
        <path d="M1 1l6 6-6 6z" fill="#c8c6c4" />
      </svg>
      <div className="ml-[7px] flex w-[93px] items-center justify-center border-b-[5px] border-l border-b-[#117865] border-l-[#d2d0ce] bg-white pt-[4px] text-[14px] font-medium text-[#252423]">Page 1</div>
      <div className="ml-px flex w-[49px] items-center justify-center bg-[#117865] pb-[2px] text-[26px] font-bold leading-none text-white">+</div>
    </div>
  );
}

function StatusBar() {
  return (
    <div className="flex h-[29px] items-center border-t border-[#e1dfdd] bg-[#f3f2f1] pl-[5px] text-[14px] text-[#605e5c]">
      <span className="flex-1">Page 1 of 1</span>
      <span className="mr-[5px] h-[2px] w-[5px] bg-[#605e5c]" />
      <div className="relative h-px w-[125px] bg-[#605e5c]">
        <span className="absolute left-[42px] top-[-6px] h-[13px] w-[5px] bg-[#605e5c]" />
        <span className="absolute left-[62px] top-[-3px] h-[7px] w-px bg-[#605e5c]" />
      </div>
      <span className="ml-[6px] text-[18px] leading-none">+</span>
      <span className="ml-[17px]">72%</span>
      <svg viewBox="0 0 20 16" className="ml-[24px] mr-[23px] h-[16px] w-[20px]">
        <path d="M.5.5h19v15H.5z" fill="#e1dfdd" stroke="#605e5c" />
        <path d="M4 6V3h3M13 3h3v3M16 10v3h-3M7 13H4v-3" fill="none" stroke="#605e5c" />
      </svg>
    </div>
  );
}

function TaskIcon({ children, active, dot }: { children: ReactNode; active?: boolean; dot?: boolean }) {
  return (
    <div className={`relative mr-[5px] flex h-[50px] w-[50px] shrink-0 items-center justify-center rounded-[5px] ${active ? "bg-[#2b3136]" : ""}`}>
      {children}
      {dot && <span className="absolute bottom-[1px] h-[4px] w-[6px] rounded-full bg-[#8a8a8a]" />}
      {active && <span className="absolute bottom-[1px] h-[3px] w-[20px] rounded-full bg-[#4cc2ff]" />}
    </div>
  );
}

function Taskbar() {
  return (
    <div className="relative flex h-[61px] items-center border-t border-black bg-gradient-to-r from-[#1b2226] via-[#1b2226] to-[#2a2221] text-white">
      <div className="relative ml-[25px] h-[40px] w-[32px]">
        <svg viewBox="0 0 32 38" className="h-[38px] w-[32px]">
          <path d="M15 6a9 9 0 1 0 7 13 8 8 0 0 1-7-13z" fill="#f0a83c" />
          <path d="M6 36c-8 0-7-10 0-10 1-6 13-7 15-1 9-1 9 11 2 11z" fill="#b9d3f2" />
        </svg>
        <span className="absolute left-[13px] top-[-2px] flex h-[20px] w-[20px] items-center justify-center rounded-full bg-[#ff99a4] text-[13px] text-[#1b1b1b]">9</span>
      </div>
      <div className="ml-[7px] w-[260px] text-[14.4px] leading-[20px]">
        <div>28°C</div>
        <div className="text-[#e3e3e3]">Mostly cloudy</div>
      </div>
      <svg viewBox="0 0 30 30" className="ml-[261px] h-[30px] w-[30px]">
        <defs>
          <linearGradient id="win" x1="0" y1="0" x2="1" y2="1">
            <stop offset="0" stopColor="#6fdcff" />
            <stop offset="1" stopColor="#0a84e8" />
          </linearGradient>
        </defs>
        <path d="M0 0h14v14H0zM16 0h14v14H16zM0 16h14v14H0zM16 16h14v14H16z" fill="url(#win)" />
      </svg>
      <div className="ml-[16px] flex h-[40px] w-[274px] items-center rounded-full bg-[#3a4144] pl-[14px] text-[16px] text-[#d0d0d0]">
        <Search className="h-[20px] w-[20px] text-white" strokeWidth={2} />
        <span className="ml-[12px]">Search</span>
      </div>
      <div className="ml-[6px] flex items-center">
        <TaskIcon>
          <svg viewBox="0 0 30 30" className="h-[30px] w-[30px]">
            <path d="M9 3h17v20H9z" fill="#f2f2f2" />
            <path d="M3 9h15v20H3z" fill="#7a7a7a" opacity="0.85" />
          </svg>
        </TaskIcon>
        <TaskIcon dot>
          <svg viewBox="0 0 30 30" className="h-[30px] w-[30px]">
            <path d="M1 3h11l3 3h14v22H1z" fill="#e0a30e" />
            <path d="M1 8h28v20H1z" fill="#ffd84a" />
            <path d="M9 18h12v9H9z" fill="#0f75c9" />
          </svg>
        </TaskIcon>
        <TaskIcon>
          <svg viewBox="0 0 30 30" className="h-[30px] w-[30px]">
            <path d="M2 2c7 0 11 4 12 13C7 15 2 10 2 2z" fill="#7fd18a" />
            <path d="M28 2c-7 0-11 4-12 13 7 0 12-5 12-13z" fill="#2a9a8a" />
            <path d="M14 16c-7 0-11 3-11 8 0 3 2 5 5 5 4 0 6-5 6-13z" fill="#35b6a0" />
            <circle cx="22" cy="23" r="6" fill="#1672c4" />
          </svg>
        </TaskIcon>
        <TaskIcon>
          <svg viewBox="0 0 30 30" className="h-[30px] w-[30px]">
            <path d="M21 1l7 3v22l-7 3-12-11-5 4-2-1.5V10.500L4 9l5 4z" fill="#0a7fd0" />
            <path d="M21 8v14l-8-7z" fill="#1b2226" />
          </svg>
        </TaskIcon>
        <TaskIcon>
          <svg viewBox="0 0 30 30" className="h-[30px] w-[30px]">
            <path d="M15 28C7 28 2 22 2 15c0-3 1-6 3-8l2 3c1-3 4-6 7-7 0 3 2 4 5 5 5 2 9 6 9 12 0 4-6 8-13 8z" fill="#f2662a" />
            <path d="M24 12C21 5 19 3 17 1c0 3 3 6 7 11z" fill="#ffb84a" />
            <circle cx="15" cy="16" r="6" fill="#7a3fc4" />
          </svg>
        </TaskIcon>
        <TaskIcon>
          <svg viewBox="0 0 30 30" className="h-[30px] w-[30px]">
            <path d="M15 4a11 11 0 1 1-.01 0" fill="none" stroke="#16bfe8" strokeWidth="4" />
            <path d="M9 24l-4 4 1-6z" fill="#16bfe8" />
          </svg>
        </TaskIcon>
        <TaskIcon>
          <svg viewBox="0 0 30 30" className="h-[30px] w-[30px]">
            <path d="M6 4l4-3h10l4 3 3 2-1 14-8 9h-4l-8-9L4 6z" fill="#f1431c" />
            <path d="M9 9l4 1h4l4-1-3 7 2 3-5 5-5-5 2-3z" fill="#fff" />
          </svg>
        </TaskIcon>
        <TaskIcon active>
          <svg viewBox="0 0 30 30" className="h-[32px] w-[32px]">
            <path d="M18 1h9v28h-9z" fill="#d9a512" />
            <path d="M10 9h10v20H10z" fill="#eec12f" />
            <path d="M3 16h9v13H3z" fill="#f7e27a" />
          </svg>
        </TaskIcon>
      </div>
      <ChevronUp className="absolute left-[1595px] h-[18px] w-[18px]" strokeWidth={1.8} />
      <div className="absolute left-[1630px] w-[40px] text-center text-[13px] leading-[19px]">
        <div>ENG</div>
        <div>IN</div>
      </div>
      <svg viewBox="0 0 20 16" className="absolute left-[1688px] h-[16px] w-[20px]">
        <path d="M1 6a13 13 0 0 1 18 0M4 9a9 9 0 0 1 12 0M7 12a4.500 4.500 0 0 1 6 0" fill="none" stroke="#fff" strokeWidth="1.5" />
        <circle cx="10" cy="14.5" r="1.3" fill="#fff" />
      </svg>
      <svg viewBox="0 0 20 20" className="absolute left-[1717px] h-[18px] w-[18px]">
        <path d="M2 7h4l5-4v14l-5-4H2z" fill="none" stroke="#fff" strokeWidth="1.3" />
        <path d="M14 7c1 2 1 4 0 6" fill="none" stroke="#aaa" strokeWidth="1.2" />
      </svg>
      <svg viewBox="0 0 22 14" className="absolute left-[1747px] h-[14px] w-[22px]">
        <path d="M1 1h17v12H1z" fill="none" stroke="#fff" strokeWidth="1.2" />
        <path d="M3 3h6v8H3z" fill="#fff" />
        <path d="M19 5h2v4h-2z" fill="#fff" />
      </svg>
      <div className="absolute right-[54px] text-right text-[13.5px] leading-[20px]">
        <div>19:53</div>
        <div>22-07-2025</div>
      </div>
      <svg viewBox="0 0 18 22" className="absolute left-[1878px] h-[22px] w-[18px]">
        <path d="M9 1c-4 0-6 3-6 7v5l-2 3h16l-2-3V8c0-4-2-7-6-7zM7 18h4v2H7z" fill="#eee" />
        <path d="M6 6h6l-4 6h5" fill="none" stroke="#222" strokeWidth="1.2" />
      </svg>
    </div>
  );
}

export default function App() {
  return (
    <div className="flex h-[1080px] w-[1920px] flex-col overflow-hidden bg-white font-['Open_Sans','Noto_Sans',sans-serif]">
      <TitleBar />
      <Ribbon />
      <div className="flex h-[790px]">
        <LeftRail />
        <div className="flex w-[1146px] shrink-0 flex-col">
          <ReportCanvas />
          <PageTabs />
        </div>
        <FiltersPane />
        <VizPane />
        <DataPane />
      </div>
      <StatusBar />
      <Taskbar />
    </div>
  );
}
